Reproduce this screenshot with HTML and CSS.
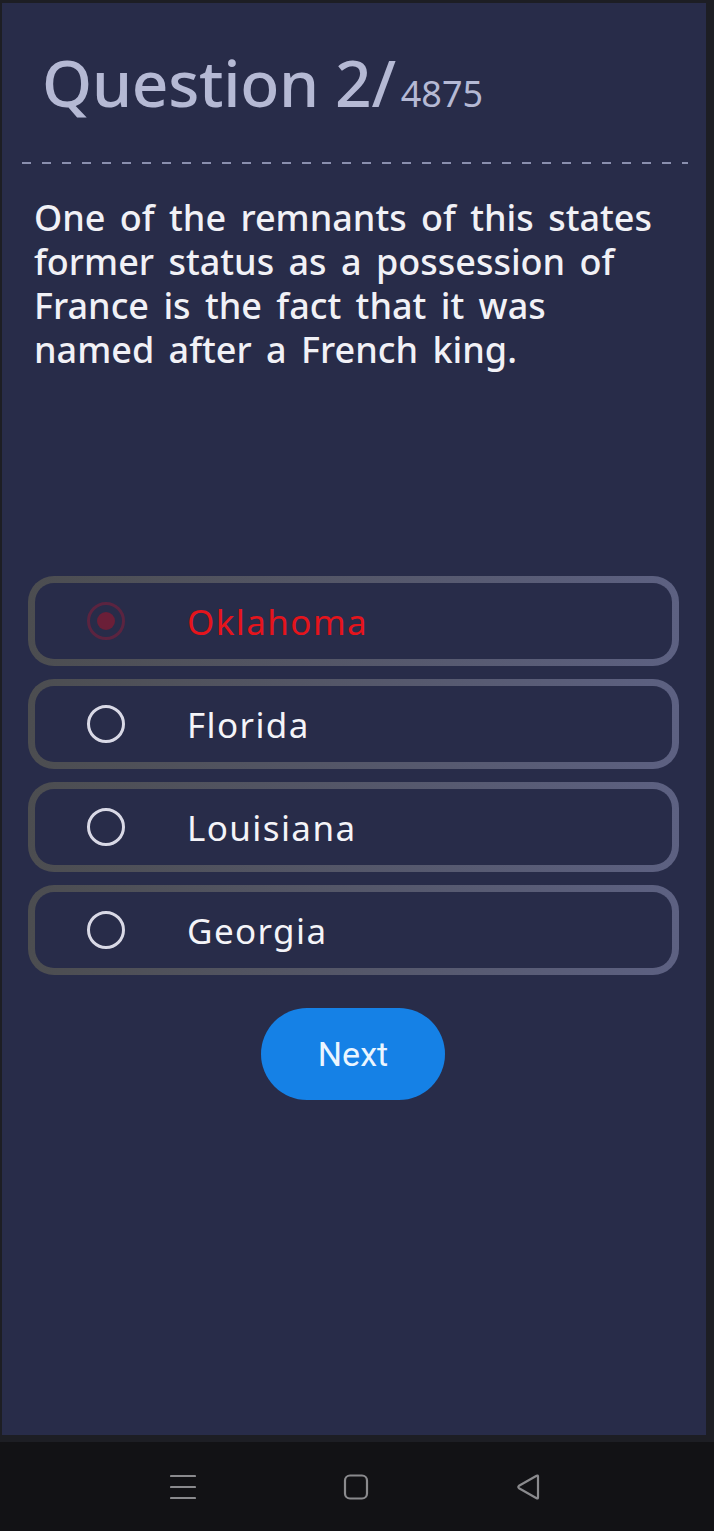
FILE: index.html
```html
<!DOCTYPE html>
<html>
<head>
<meta charset="utf-8">
<link rel="stylesheet" href="styles.css">
</head>
<body>
<div class="frame">
  <main class="panel">
    <h1 class="title">Question 2/<span class="total">4875</span></h1>
    <div class="dash"></div>
    <p class="question">One of the remnants of this states former status as a possession of France is the fact that it was named after a French king.</p>
    <div class="options">
      <div class="option wrong"><span class="radio checked"></span><span class="label">Oklahoma</span></div>
      <div class="option"><span class="radio"></span><span class="label">Florida</span></div>
      <div class="option"><span class="radio"></span><span class="label">Louisiana</span></div>
      <div class="option"><span class="radio"></span><span class="label">Georgia</span></div>
    </div>
    <div class="actions"><button class="next">Next</button></div>
  </main>
</div>
<nav class="navbar">
  <svg class="nav-icon" width="26" height="26" viewBox="0 0 26 26"><path d="M1 2h24M1 13h24M1 24h24" stroke="#8a8a8d" stroke-width="2.2" stroke-linecap="round" fill="none"/></svg>
  <svg class="nav-icon" width="26" height="26" viewBox="0 0 26 26"><rect x="2" y="1.5" width="22" height="23" rx="5" stroke="#8a8a8d" stroke-width="2.2" fill="none"/></svg>
  <svg class="nav-icon" width="26" height="26" viewBox="0 0 26 26"><path d="M22 2.5 L22 23.5 Q22 25 20.6 24.2 L3 14.2 Q1.6 13 3 11.8 L20.6 1.8 Q22 1 22 2.5 Z" stroke="#8a8a8d" stroke-width="2.2" stroke-linejoin="round" fill="none"/></svg>
</nav>
</body>
</html>
```

FILE: styles.css
```css
* { box-sizing: border-box; }
html, body { margin: 0; padding: 0; }
body {
  background: #1d1e24;
  font-family: "Noto Sans", sans-serif;
  width: 714px;
}
.frame {
  height: 1442px;
  padding: 3px 8px 7px 2px;
}
.panel {
  height: 100%;
  background: #282c49;
  padding-top: 40px;
}
.title {
  margin: 0 0 0 40px;
  font-family: "Noto Sans", sans-serif;
  font-weight: 500;
  font-size: 64px;
  line-height: 80px;
  color: #b5b9d4;
  letter-spacing: -0.3px;
}
.total {
  margin-left: 5px;
  font-size: 36px;
  font-weight: 400;
  letter-spacing: 0;
}
.dash {
  margin: 28px 0 0 20px;
  width: 666px;
  height: 2px;
  background: repeating-linear-gradient(90deg, #8a8fae 0 9px, transparent 9px 20px);
}
.question {
  margin: 32px 0 0 32px;
  max-width: 640px;
  font-family: "Noto Sans", sans-serif;
  font-weight: 500;
  font-size: 36px;
  line-height: 44px;
  word-spacing: 5px;
  color: #f1f1f6;
}
.options {
  margin: 204px 0 0 26px;
  width: 651px;
  display: flex;
  flex-direction: column;
  gap: 13px;
}
.option {
  height: 90px;
  border: 7px solid transparent;
  border-radius: 26px;
  background: linear-gradient(#282c49, #282c49) padding-box,
              linear-gradient(90deg, #4c4d50, #5d6182) border-box;
  display: flex;
  align-items: center;
  padding-left: 52px;
}
.radio {
  width: 38px;
  height: 38px;
  border: 3px solid #d9d9e6;
  border-radius: 50%;
  flex: none;
}
.radio.checked {
  border-color: #5b2440;
  position: relative;
}
.radio.checked::after {
  content: "";
  position: absolute;
  left: 50%;
  top: 50%;
  width: 18px;
  height: 18px;
  margin: -9px 0 0 -9px;
  border-radius: 50%;
  background: #6b1f38;
}
.label {
  margin-left: 62px;
  font-family: "Noto Sans", sans-serif;
  font-size: 35px;
  color: #f4f4f8;
  letter-spacing: 1.4px;
}
.wrong .label { color: #e5141c; }
.actions {
  display: flex;
  justify-content: center;
  margin-top: 33px;
  padding-right: 2px;
}
.next {
  width: 184px;
  height: 92px;
  border: none;
  border-radius: 46px;
  background: #1581e6;
  color: #eaf5ff;
  font-family: "Roboto", sans-serif;
  font-size: 34px;
}
.navbar {
  height: 89px;
  background: #121215;
  display: flex;
  justify-content: center;
  align-items: center;
  gap: 147px;
  padding-right: 3px;
}
```
